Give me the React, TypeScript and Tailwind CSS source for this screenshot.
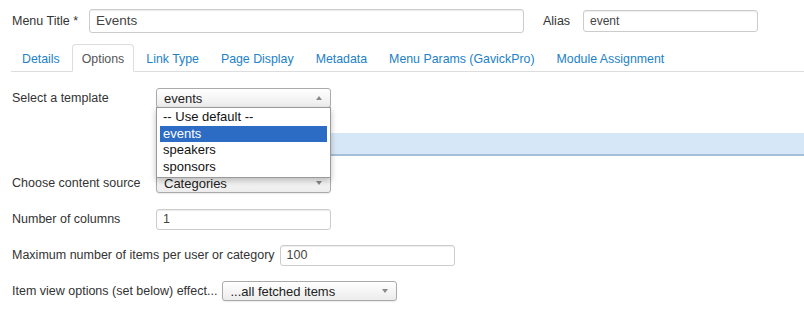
import React from 'react';

const tabs = ['Details', 'Options', 'Link Type', 'Page Display', 'Metadata', 'Menu Params (GavickPro)', 'Module Assignment'];
const templateOptions = ['-- Use default --', 'events', 'speakers', 'sponsors'];

const Arrow: React.FC<{ up?: boolean }> = ({ up }) =>
  up ? (
    <span className="w-0 h-0 border-x-[3px] border-x-transparent border-b-[4px] border-b-[#8a8a8a]" />
  ) : (
    <span className="w-0 h-0 border-x-[3px] border-x-transparent border-t-[4px] border-t-[#8a8a8a]" />
  );

const FakeSelect: React.FC<{ value: string; width: string; open?: boolean }> = ({ value, width, open }) => (
  <div
    className={`flex items-center justify-between h-[20px] ${width} pl-[7px] pr-[8px] border border-[#aaa] rounded-[3px] bg-gradient-to-b from-white to-[#ececec] shadow-[0_1px_1px_rgba(0,0,0,0.08)] text-[13px] text-[#222]`}
  >
    <span className="leading-none">{value}</span>
    <Arrow up={open} />
  </div>
);

const TextInput: React.FC<{ value: string; className?: string }> = ({ value, className = '' }) => (
  <div
    className={`flex items-center border border-[#ccc] rounded-[3px] bg-white shadow-[inset_0_1px_1px_rgba(0,0,0,0.075)] pl-[6px] text-[#444] ${className}`}
  >
    {value}
  </div>
);

const App: React.FC = () => {
  return (
    <div className="w-[804px] h-[319px] overflow-hidden bg-white text-[#333] text-[12.5px] font-['Liberation_Sans',Arial,sans-serif]">
      {/* Title + alias */}
      <div className="flex items-center pl-3 pt-[9px]">
        <span className="w-[77px]">Menu Title *</span>
        <TextInput value="Events" className="w-[435px] h-[24px] text-[13.5px]" />
        <span className="ml-[19px] w-[40px]">Alias</span>
        <TextInput value="event" className="w-[175px] h-[22px] text-[12px]" />
      </div>

      {/* Tabs */}
      <div className="mt-[11px] ml-[11px] flex gap-[2px] border-b border-[#ddd] h-[28px] pl-[1px] text-[12.35px]">
        {tabs.map(tab =>
          tab === 'Options' ? (
            <div
              key={tab}
              className="flex items-center px-[9px] h-[28px] pt-[2px] bg-white border border-[#ddd] border-b-white rounded-t-[4px] text-[#555]"
            >
              {tab}
            </div>
          ) : (
            <div key={tab} className="flex items-center px-[10px] h-[27px] pt-[3px] text-[#2281c8]">
              {tab}
            </div>
          )
        )}
      </div>

      {/* Options form */}
      <div className="pl-3">
        <div className="flex items-center h-[20px] mt-4">
          <span className="w-[144px]">Select a template</span>
          <div className="relative">
            <FakeSelect value="events" width="w-[175px]" open />
            <ul className="absolute z-10 left-0 top-[19px] w-[175px] h-[71px] bg-white border border-[#9a9a9a] shadow-[0_3px_6px_rgba(0,0,0,0.25)] px-[3px] pt-[1px] text-[13px] text-[#111]">
              {templateOptions.map(opt => (
                <li
                  key={opt}
                  className={`h-[16.5px] leading-[16.5px] px-[3px] ${opt === 'events' ? 'bg-[#2d6cc4] text-white' : ''}`}
                >
                  {opt}
                </li>
              ))}
            </ul>
          </div>
        </div>

        <div className="ml-[144px] mt-[25px] h-[23px] bg-[#d6e7f7] border-b-2 border-[#a4bfd8]" />

        <div className="flex items-center h-[20px] mt-[17px]">
          <span className="w-[144px]">Choose content source</span>
          <FakeSelect value="Categories" width="w-[175px]" />
        </div>

        <div className="flex items-center h-[20px] mt-4">
          <span className="w-[144px]">Number of columns</span>
          <TextInput value="1" className="w-[175px] h-[21px] text-[12.5px]" />
        </div>

        <div className="flex items-center h-[20px] mt-4">
          <span className="mr-[5px]">Maximum number of items per user or category</span>
          <TextInput value="100" className="w-[175px] h-[21px] text-[12.5px]" />
        </div>

        <div className="flex items-center h-[20px] mt-4">
          <span className="mr-[5px]">Item view options (set below) effect...</span>
          <FakeSelect value="...all fetched items" width="w-[175px]" />
        </div>
      </div>
    </div>
  );
};

export default App;
